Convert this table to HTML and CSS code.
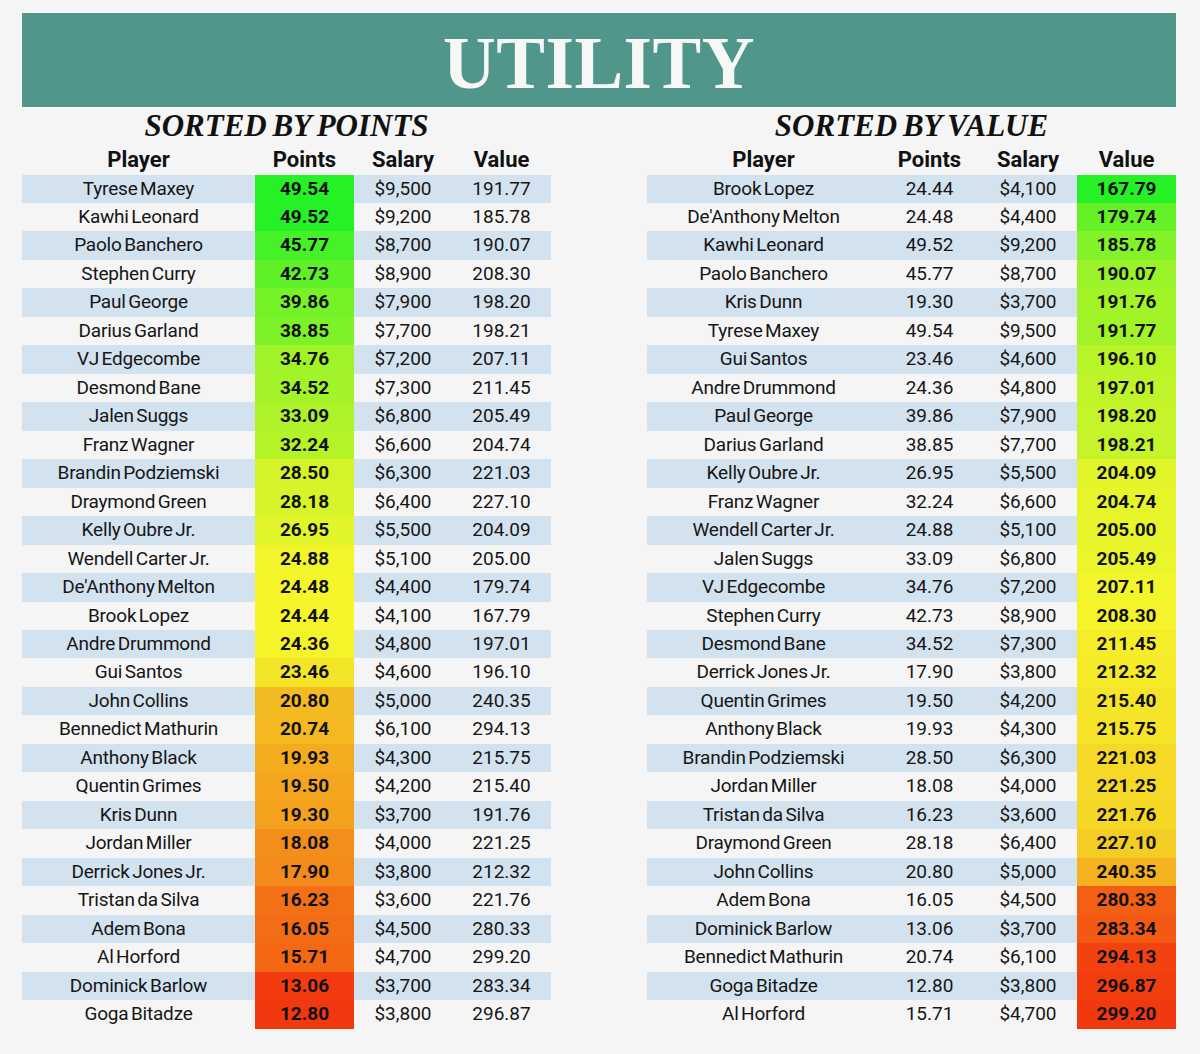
FILE: index.html
```html
<!DOCTYPE html>
<html lang="en">
<head>
<meta charset="utf-8">
<title>Utility</title>
<link rel="stylesheet" href="styles.css">
</head>
<body>
<div class="page">
  <header class="banner"><h1>UTILITY</h1></header>
  <div class="tables">
    <section class="tbl">
      <h2>SORTED BY POINTS</h2>
      <div class="row head"><div>Player</div><div>Points</div><div>Salary</div><div>Value</div></div>
      <div class="row"><div class="name">Tyrese Maxey</div><div class="heat" style="background:rgb(38,240,38)">49.54</div><div>$9,500</div><div>191.77</div></div>
      <div class="row"><div class="name">Kawhi Leonard</div><div class="heat" style="background:rgb(38,240,38)">49.52</div><div>$9,200</div><div>185.78</div></div>
      <div class="row"><div class="name">Paolo Banchero</div><div class="heat" style="background:rgb(69,241,39)">45.77</div><div>$8,700</div><div>190.07</div></div>
      <div class="row"><div class="name">Stephen Curry</div><div class="heat" style="background:rgb(94,241,39)">42.73</div><div>$8,900</div><div>208.30</div></div>
      <div class="row"><div class="name">Paul George</div><div class="heat" style="background:rgb(118,242,40)">39.86</div><div>$7,900</div><div>198.20</div></div>
      <div class="row"><div class="name">Darius Garland</div><div class="heat" style="background:rgb(126,242,40)">38.85</div><div>$7,700</div><div>198.21</div></div>
      <div class="row"><div class="name">VJ Edgecombe</div><div class="heat" style="background:rgb(160,243,40)">34.76</div><div>$7,200</div><div>207.11</div></div>
      <div class="row"><div class="name">Desmond Bane</div><div class="heat" style="background:rgb(162,243,40)">34.52</div><div>$7,300</div><div>211.45</div></div>
      <div class="row"><div class="name">Jalen Suggs</div><div class="heat" style="background:rgb(174,243,41)">33.09</div><div>$6,800</div><div>205.49</div></div>
      <div class="row"><div class="name">Franz Wagner</div><div class="heat" style="background:rgb(181,243,41)">32.24</div><div>$6,600</div><div>204.74</div></div>
      <div class="row"><div class="name">Brandin Podziemski</div><div class="heat" style="background:rgb(212,244,41)">28.50</div><div>$6,300</div><div>221.03</div></div>
      <div class="row"><div class="name">Draymond Green</div><div class="heat" style="background:rgb(214,244,41)">28.18</div><div>$6,400</div><div>227.10</div></div>
      <div class="row"><div class="name">Kelly Oubre Jr.</div><div class="heat" style="background:rgb(225,245,42)">26.95</div><div>$5,500</div><div>204.09</div></div>
      <div class="row"><div class="name">Wendell Carter Jr.</div><div class="heat" style="background:rgb(241,245,42)">24.88</div><div>$5,100</div><div>205.00</div></div>
      <div class="row"><div class="name">De'Anthony Melton</div><div class="heat" style="background:rgb(245,245,42)">24.48</div><div>$4,400</div><div>179.74</div></div>
      <div class="row"><div class="name">Brook Lopez</div><div class="heat" style="background:rgb(245,245,42)">24.44</div><div>$4,100</div><div>167.79</div></div>
      <div class="row"><div class="name">Andre Drummond</div><div class="heat" style="background:rgb(245,243,42)">24.36</div><div>$4,800</div><div>197.01</div></div>
      <div class="row"><div class="name">Gui Santos</div><div class="heat" style="background:rgb(245,229,40)">23.46</div><div>$4,600</div><div>196.10</div></div>
      <div class="row"><div class="name">John Collins</div><div class="heat" style="background:rgb(244,186,33)">20.80</div><div>$5,000</div><div>240.35</div></div>
      <div class="row"><div class="name">Bennedict Mathurin</div><div class="heat" style="background:rgb(244,185,33)">20.74</div><div>$6,100</div><div>294.13</div></div>
      <div class="row"><div class="name">Anthony Black</div><div class="heat" style="background:rgb(244,172,31)">19.93</div><div>$4,300</div><div>215.75</div></div>
      <div class="row"><div class="name">Quentin Grimes</div><div class="heat" style="background:rgb(244,165,30)">19.50</div><div>$4,200</div><div>215.40</div></div>
      <div class="row"><div class="name">Kris Dunn</div><div class="heat" style="background:rgb(244,161,30)">19.30</div><div>$3,700</div><div>191.76</div></div>
      <div class="row"><div class="name">Jordan Miller</div><div class="heat" style="background:rgb(243,142,27)">18.08</div><div>$4,000</div><div>221.25</div></div>
      <div class="row"><div class="name">Derrick Jones Jr.</div><div class="heat" style="background:rgb(243,139,26)">17.90</div><div>$3,800</div><div>212.32</div></div>
      <div class="row"><div class="name">Tristan da Silva</div><div class="heat" style="background:rgb(243,112,22)">16.23</div><div>$3,600</div><div>221.76</div></div>
      <div class="row"><div class="name">Adem Bona</div><div class="heat" style="background:rgb(243,109,22)">16.05</div><div>$4,500</div><div>280.33</div></div>
      <div class="row"><div class="name">Al Horford</div><div class="heat" style="background:rgb(243,103,21)">15.71</div><div>$4,700</div><div>299.20</div></div>
      <div class="row"><div class="name">Dominick Barlow</div><div class="heat" style="background:rgb(242,60,15)">13.06</div><div>$3,700</div><div>283.34</div></div>
      <div class="row"><div class="name">Goga Bitadze</div><div class="heat" style="background:rgb(242,56,14)">12.80</div><div>$3,800</div><div>296.87</div></div>
    </section>
    <section class="tbl">
      <h2>SORTED BY VALUE</h2>
      <div class="row head"><div>Player</div><div>Points</div><div>Salary</div><div>Value</div></div>
      <div class="row"><div class="name">Brook Lopez</div><div>24.44</div><div>$4,100</div><div class="heat" style="background:rgb(38,240,38)">167.79</div></div>
      <div class="row"><div class="name">De'Anthony Melton</div><div>24.48</div><div>$4,400</div><div class="heat" style="background:rgb(100,241,39)">179.74</div></div>
      <div class="row"><div class="name">Kawhi Leonard</div><div>49.52</div><div>$9,200</div><div class="heat" style="background:rgb(131,242,40)">185.78</div></div>
      <div class="row"><div class="name">Paolo Banchero</div><div>45.77</div><div>$8,700</div><div class="heat" style="background:rgb(154,243,40)">190.07</div></div>
      <div class="row"><div class="name">Kris Dunn</div><div>19.30</div><div>$3,700</div><div class="heat" style="background:rgb(162,243,40)">191.76</div></div>
      <div class="row"><div class="name">Tyrese Maxey</div><div>49.54</div><div>$9,500</div><div class="heat" style="background:rgb(162,243,40)">191.77</div></div>
      <div class="row"><div class="name">Gui Santos</div><div>23.46</div><div>$4,600</div><div class="heat" style="background:rgb(185,244,41)">196.10</div></div>
      <div class="row"><div class="name">Andre Drummond</div><div>24.36</div><div>$4,800</div><div class="heat" style="background:rgb(190,244,41)">197.01</div></div>
      <div class="row"><div class="name">Paul George</div><div>39.86</div><div>$7,900</div><div class="heat" style="background:rgb(196,244,41)">198.20</div></div>
      <div class="row"><div class="name">Darius Garland</div><div>38.85</div><div>$7,700</div><div class="heat" style="background:rgb(196,244,41)">198.21</div></div>
      <div class="row"><div class="name">Kelly Oubre Jr.</div><div>26.95</div><div>$5,500</div><div class="heat" style="background:rgb(226,245,42)">204.09</div></div>
      <div class="row"><div class="name">Franz Wagner</div><div>32.24</div><div>$6,600</div><div class="heat" style="background:rgb(230,245,42)">204.74</div></div>
      <div class="row"><div class="name">Wendell Carter Jr.</div><div>24.88</div><div>$5,100</div><div class="heat" style="background:rgb(231,245,42)">205.00</div></div>
      <div class="row"><div class="name">Jalen Suggs</div><div>33.09</div><div>$6,800</div><div class="heat" style="background:rgb(234,245,42)">205.49</div></div>
      <div class="row"><div class="name">VJ Edgecombe</div><div>34.76</div><div>$7,200</div><div class="heat" style="background:rgb(242,245,42)">207.11</div></div>
      <div class="row"><div class="name">Stephen Curry</div><div>42.73</div><div>$8,900</div><div class="heat" style="background:rgb(245,244,42)">208.30</div></div>
      <div class="row"><div class="name">Desmond Bane</div><div>34.52</div><div>$7,300</div><div class="heat" style="background:rgb(245,237,41)">211.45</div></div>
      <div class="row"><div class="name">Derrick Jones Jr.</div><div>17.90</div><div>$3,800</div><div class="heat" style="background:rgb(245,235,41)">212.32</div></div>
      <div class="row"><div class="name">Quentin Grimes</div><div>19.50</div><div>$4,200</div><div class="heat" style="background:rgb(245,229,40)">215.40</div></div>
      <div class="row"><div class="name">Anthony Black</div><div>19.93</div><div>$4,300</div><div class="heat" style="background:rgb(245,228,40)">215.75</div></div>
      <div class="row"><div class="name">Brandin Podziemski</div><div>28.50</div><div>$6,300</div><div class="heat" style="background:rgb(245,217,38)">221.03</div></div>
      <div class="row"><div class="name">Jordan Miller</div><div>18.08</div><div>$4,000</div><div class="heat" style="background:rgb(245,217,38)">221.25</div></div>
      <div class="row"><div class="name">Tristan da Silva</div><div>16.23</div><div>$3,600</div><div class="heat" style="background:rgb(245,216,38)">221.76</div></div>
      <div class="row"><div class="name">Draymond Green</div><div>28.18</div><div>$6,400</div><div class="heat" style="background:rgb(244,205,36)">227.10</div></div>
      <div class="row"><div class="name">John Collins</div><div>20.80</div><div>$5,000</div><div class="heat" style="background:rgb(244,178,32)">240.35</div></div>
      <div class="row"><div class="name">Adem Bona</div><div>16.05</div><div>$4,500</div><div class="heat" style="background:rgb(243,95,20)">280.33</div></div>
      <div class="row"><div class="name">Dominick Barlow</div><div>13.06</div><div>$3,700</div><div class="heat" style="background:rgb(243,89,19)">283.34</div></div>
      <div class="row"><div class="name">Bennedict Mathurin</div><div>20.74</div><div>$6,100</div><div class="heat" style="background:rgb(242,66,16)">294.13</div></div>
      <div class="row"><div class="name">Goga Bitadze</div><div>12.80</div><div>$3,800</div><div class="heat" style="background:rgb(242,61,15)">296.87</div></div>
      <div class="row"><div class="name">Al Horford</div><div>15.71</div><div>$4,700</div><div class="heat" style="background:rgb(242,56,14)">299.20</div></div>
    </section>
  </div>
</div>
</body>
</html>
```
FILE: styles.css
```css
html, body {
  margin: 0;
  padding: 0;
  background: #f5f5f5;
}
body {
  font-family: Roboto, "Liberation Sans", sans-serif;
  color: #161616;
}
.page {
  width: 1154px;
  padding: 13px 0 0 22px;
}
.banner {
  height: 94px;
  background: #50968a;
  display: flex;
  align-items: center;
  justify-content: center;
}
.banner h1 {
  margin: 6px 0 0 0;
  font-family: "Liberation Serif", "Times New Roman", serif;
  font-weight: bold;
  font-size: 73px;
  line-height: 1;
  letter-spacing: 0.5px;
  color: #f7f7f5;
}
.tables {
  display: flex;
  justify-content: space-between;
}
.tbl {
  width: 529px;
}
.tbl h2 {
  margin: 0;
  height: 38px;
  line-height: 38px;
  text-align: center;
  font-family: "Liberation Serif", "Times New Roman", serif;
  font-weight: bold;
  font-style: italic;
  font-size: 31px;
  letter-spacing: 0;
  word-spacing: -2px;
  color: #111;
}
.row {
  display: grid;
  grid-template-columns: 233px 99px 98px 99px;
  height: 28.47px;
  font-size: 19px;
  line-height: 28.47px;
  text-align: center;
  word-spacing: -2px;
}
.row > div {
  white-space: nowrap;
}
.row .name {
  letter-spacing: -0.2px;
}
.row:nth-child(odd) {
  background: #d3e2ef;
}
.row.head {
  height: 29.5px;
  line-height: 29.5px;
  background: transparent;
  font-weight: bold;
  font-size: 22px;
  color: #111;
}
.heat {
  font-weight: bold;
  color: #111;
}
```
